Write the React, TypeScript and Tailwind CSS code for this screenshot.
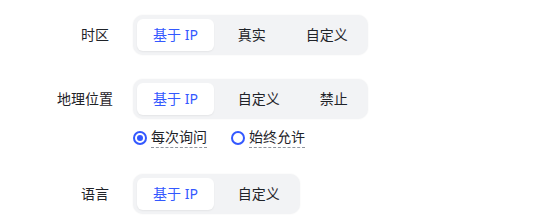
import { useState } from "react";

type Opt = { value: string; label: string };

function Segmented({
  options,
  value,
  onChange,
}: {
  options: Opt[];
  value: string;
  onChange: (v: string) => void;
}) {
  return (
    <div className="inline-flex gap-2 p-1 rounded-[10px] bg-[#f2f3f5] shadow-[0_0_2px_rgba(0,0,0,0.06)]">
      {options.map((o) => (
        <button
          key={o.value}
          onClick={() => onChange(o.value)}
          className={
            o.value === value
              ? "h-8 px-4 rounded-[6px] bg-white text-[#3358ff] text-sm leading-8 whitespace-nowrap shadow-[0_1px_2px_rgba(0,0,0,0.06)]"
              : "h-8 px-4 rounded-[6px] text-[#1f2329] text-sm leading-8 whitespace-nowrap"
          }
        >
          {o.label}
        </button>
      ))}
    </div>
  );
}

function Radio({ checked, label, onClick }: { checked: boolean; label: string; onClick: () => void }) {
  return (
    <label className="flex items-center gap-1 cursor-pointer" onClick={onClick}>
      <span className="w-[14px] h-[14px] rounded-full border-2 border-[#3358ff] flex items-center justify-center">
        {checked && <span className="w-[6px] h-[6px] rounded-full bg-[#3358ff]" />}
      </span>
      <span className="text-sm leading-5 text-[#1f2329] border-b border-dashed border-[#8f959e]">{label}</span>
    </label>
  );
}

function Row({ label, children }: { label: string; children: React.ReactNode }) {
  return (
    <div className="flex items-center">
      <div className="w-[52px] mr-6 text-right whitespace-nowrap text-sm text-[#1f2329]">{label}</div>
      {children}
    </div>
  );
}

export default function App() {
  const [tz, setTz] = useState("ip");
  const [geo, setGeo] = useState("ip");
  const [ask, setAsk] = useState("ask");
  const [lang, setLang] = useState("ip");

  return (
    <div
      className="w-[560px] h-[224px] bg-white pt-[15px] pl-[57px]"
      style={{ fontFamily: '"Noto Sans", "Noto Sans CJK SC", sans-serif' }}
    >
      <Row label="时区">
        <Segmented
          value={tz}
          onChange={setTz}
          options={[
            { value: "ip", label: "基于 IP" },
            { value: "real", label: "真实" },
            { value: "custom", label: "自定义" },
          ]}
        />
      </Row>
      <div className="mt-6">
        <Row label="地理位置">
          <Segmented
            value={geo}
            onChange={setGeo}
            options={[
              { value: "ip", label: "基于 IP" },
              { value: "custom", label: "自定义" },
              { value: "off", label: "禁止" },
            ]}
          />
        </Row>
        <div className="flex items-center gap-6 mt-2 ml-[76px]">
          <Radio checked={ask === "ask"} label="每次询问" onClick={() => setAsk("ask")} />
          <Radio checked={ask === "allow"} label="始终允许" onClick={() => setAsk("allow")} />
        </div>
      </div>
      <div className="mt-[26px]">
        <Row label="语言">
          <Segmented
            value={lang}
            onChange={setLang}
            options={[
              { value: "ip", label: "基于 IP" },
              { value: "custom", label: "自定义" },
            ]}
          />
        </Row>
      </div>
    </div>
  );
}
